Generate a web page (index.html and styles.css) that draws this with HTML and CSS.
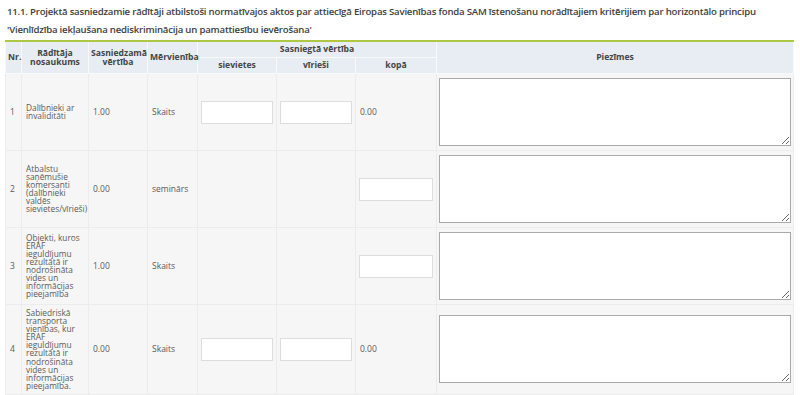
FILE: index.html
```html
<!DOCTYPE html>
<html lang="lv">
<head>
<meta charset="utf-8">
<title>Horizontālais princips</title>
<link rel="stylesheet" href="styles.css">
</head>
<body>
<section class="block">
  <h2 class="block-title">11.1. Projektā sasniedzamie rādītāji atbilstoši normatīvajos aktos par attiecīgā Eiropas Savienības fonda SAM īstenošanu norādītajiem kritērijiem par horizontālo principu 'Vienlīdzība iekļaušana nediskriminācija un pamattiesību ievērošana'</h2>
  <table class="grid">
    <colgroup>
      <col class="c-nr">
      <col class="c-name">
      <col class="c-target">
      <col class="c-unit">
      <col class="c-val">
      <col class="c-val">
      <col class="c-sum">
      <col class="c-note">
    </colgroup>
    <thead>
      <tr>
        <th rowspan="2">Nr.</th>
        <th rowspan="2">Rādītāja nosaukums</th>
        <th rowspan="2">Sasniedzamā vērtība</th>
        <th rowspan="2">Mērvienība</th>
        <th colspan="3">Sasniegtā vērtība</th>
        <th rowspan="2">Piezīmes</th>
      </tr>
      <tr>
        <th>sievietes</th>
        <th>vīrieši</th>
        <th>kopā</th>
      </tr>
    </thead>
    <tbody>
      <tr class="r-1">
        <td>1</td>
        <td class="name">Dalībnieki ar invaliditāti</td>
        <td>1.00</td>
        <td>Skaits</td>
        <td class="in"><input type="text" class="field"></td>
        <td class="in"><input type="text" class="field"></td>
        <td>0.00</td>
        <td class="note"><textarea class="memo"></textarea></td>
      </tr>
      <tr class="r-2">
        <td>2</td>
        <td class="name">Atbalstu saņēmušie komersanti (dalībnieki valdēs sievietes/vīrieši)</td>
        <td>0.00</td>
        <td>seminārs</td>
        <td></td>
        <td></td>
        <td class="in"><input type="text" class="field"></td>
        <td class="note"><textarea class="memo"></textarea></td>
      </tr>
      <tr class="r-3">
        <td>3</td>
        <td class="name">Objekti, kuros ERAF ieguldījumu rezultātā ir nodrošināta vides un informācijas pieejamība</td>
        <td>1.00</td>
        <td>Skaits</td>
        <td></td>
        <td></td>
        <td class="in"><input type="text" class="field"></td>
        <td class="note"><textarea class="memo"></textarea></td>
      </tr>
      <tr class="r-4">
        <td>4</td>
        <td class="name">Sabiedriskā transporta vienības, kur ERAF ieguldījumu rezultātā ir nodrošināta vides un informācijas pieejamība.</td>
        <td>0.00</td>
        <td>Skaits</td>
        <td class="in"><input type="text" class="field"></td>
        <td class="in"><input type="text" class="field"></td>
        <td>0.00</td>
        <td class="note"><textarea class="memo"></textarea></td>
      </tr>
    </tbody>
  </table>
</section>
</body>
</html>
```

FILE: styles.css
```css
html, body {
  margin: 0;
  padding: 0;
  background: #ffffff;
}

body {
  font-family: "Open Sans", "Noto Sans", sans-serif;
  color: #5a5a5a;
}

.block {
  padding: 3px 0 0 5px;
}

.block-title {
  margin: 0;
  padding: 0 0 0 2px;
  font-size: 9.6px;
  font-weight: 600;
  letter-spacing: -0.2px;
  line-height: 18px;
  color: #3d3d3d;
  height: 36px;
}

.grid {
  width: 788px;
  table-layout: fixed;
  border-collapse: collapse;
  border-top: 2px solid #afc844;
  margin-top: 1px;
  font-size: 8.5px;
  line-height: 8.1px;
}

.c-nr { width: 16px; }
.c-name { width: 67px; }
.c-target { width: 59px; }
.c-unit { width: 50px; }
.c-val { width: 79px; }
.c-sum { width: 81px; }
.c-note { width: 357px; }

.grid th {
  background: #e8edf3;
  border: 1px solid #f7f9fb;
  border-top: 0;
  color: #454545;
  font-weight: 700;
  font-size: 8.6px;
  line-height: 8.6px;
  height: 15px;
  padding: 0 2px;
  text-align: center;
  vertical-align: middle;
}

.grid td {
  background: #f6f6f6;
  border: 1px solid #ececec;
  padding: 4px 4px;
  vertical-align: middle;
  text-align: left;
  overflow: hidden;
}

.grid td.name {
  padding: 4px 0 4px 4px;
  font-size: 8.3px;
}

.grid td.in {
  padding: 4px 3px;
}

.grid td.note {
  padding: 4px 2px 4px 2px;
}

.r-1 td, .r-2 td, .r-3 td {
  height: 67px;
}

.field {
  display: block;
  box-sizing: border-box;
  width: 100%;
  height: 23px;
  margin: 0;
  border: 1px solid #dddddd;
  background: #ffffff;
  outline: none;
}

.memo {
  display: block;
  box-sizing: border-box;
  width: 352px;
  height: 68px;
  margin: 0;
  border: 1px solid #a9a9a9;
  background: #ffffff;
  font-family: inherit;
  outline: none;
}
```
